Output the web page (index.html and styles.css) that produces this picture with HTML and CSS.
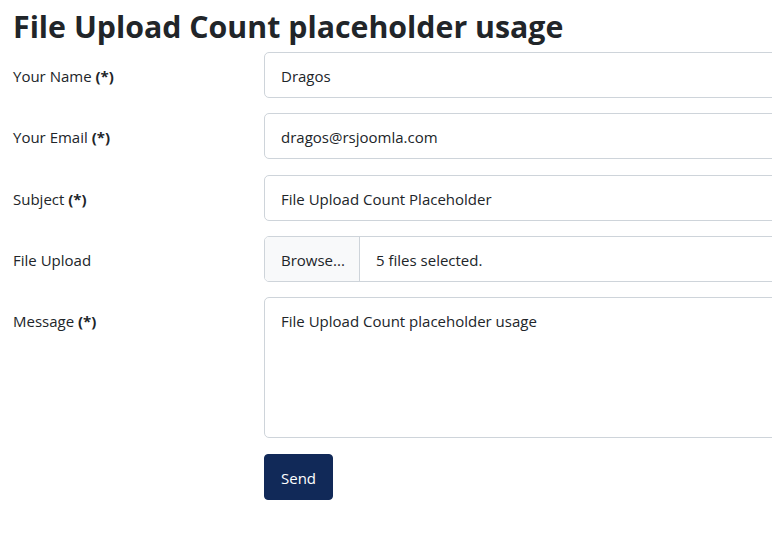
FILE: index.html
```html
<!DOCTYPE html>
<html>
<head>
<meta charset="utf-8">
<link rel="stylesheet" href="styles.css">
</head>
<body>
<div class="page">
  <h1 class="title">File Upload Count placeholder usage</h1>
  <form class="form">
    <div class="row">
      <label class="label">Your Name <b>(*)</b></label>
      <div class="field"><div class="control">Dragos</div></div>
    </div>
    <div class="row">
      <label class="label">Your Email <b>(*)</b></label>
      <div class="field"><div class="control">dragos@rsjoomla.com</div></div>
    </div>
    <div class="row">
      <label class="label">Subject <b>(*)</b></label>
      <div class="field"><div class="control">File Upload Count Placeholder</div></div>
    </div>
    <div class="row">
      <label class="label">File Upload</label>
      <div class="field"><div class="control file"><span class="browse">Browse...</span><span class="fname">5 files selected.</span></div></div>
    </div>
    <div class="row">
      <label class="label">Message <b>(*)</b></label>
      <div class="field"><div class="control area">File Upload Count placeholder usage</div></div>
    </div>
    <div class="row">
      <div class="label"></div>
      <div class="field"><button type="button" class="btn">Send</button></div>
    </div>
  </form>
</div>
</body>
</html>
```

FILE: styles.css
```css
html, body {
  margin: 0;
  padding: 0;
  background: #fff;
  overflow: hidden;
}
body {
  font-family: "Open Sans", "Noto Sans", sans-serif;
  font-size: 15px;
  color: #212529;
}
.page {
  padding: 0 13px;
  width: 1000px;
}
.title {
  font-size: 30.3px;
  font-weight: 700;
  line-height: 38px;
  margin: 8px 0 6px;
  color: #212529;
}
.form {
  display: flex;
  flex-direction: column;
  gap: 15.3px;
}
.row {
  display: flex;
  align-items: flex-start;
}
.label {
  width: 251px;
  flex: none;
  line-height: 24px;
  padding-top: 12px;
}
.label b { font-weight: 700; }
.field {
  width: 600px;
}
.control {
  box-sizing: border-box;
  height: 46px;
  border: 1px solid #ced4da;
  border-radius: 5px;
  padding: 11px 16px 10px;
  line-height: 24px;
}
.control.file {
  padding: 0;
  display: flex;
  overflow: hidden;
}
.browse {
  background: #f8f9fa;
  border-right: 1px solid #ced4da;
  padding: 11px 16px 10px;
  width: 95px;
  box-sizing: border-box;
}
.fname {
  padding: 11px 16px 10px;
}
.control.area {
  height: 141px;
}
.btn {
  font-family: inherit;
  font-size: 15px;
  color: #fff;
  background: #112958;
  border: 1px solid #112958;
  border-radius: 4px;
  height: 46px;
  width: 69px;
  padding: 1px 0 0;
  line-height: 24px;
  margin-top: 1px;
}
```
